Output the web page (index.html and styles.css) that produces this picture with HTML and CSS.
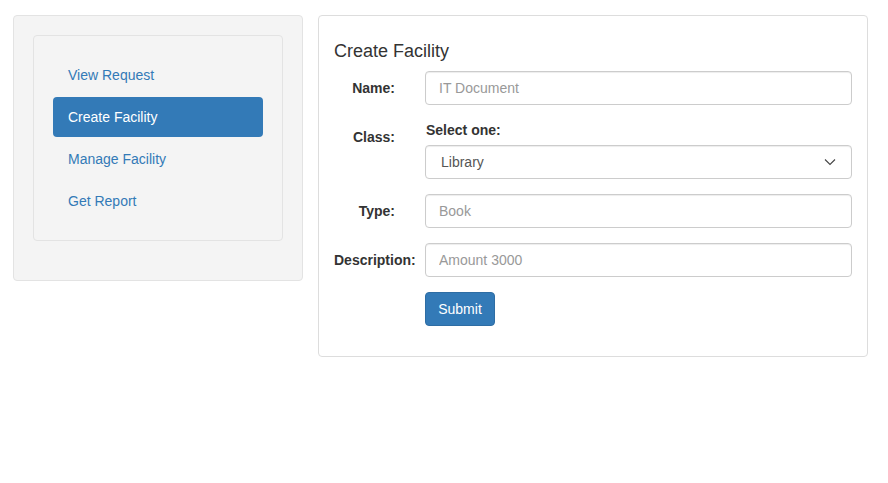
FILE: index.html
```html
<!DOCTYPE html>
<html>
<head>
<meta charset="utf-8">
<link rel="stylesheet" href="styles.css">
</head>
<body>
<div class="layout">
  <aside class="well outer">
    <div class="well inner">
      <ul class="pills">
        <li><a href="#">View Request</a></li>
        <li class="active"><a href="#">Create Facility</a></li>
        <li><a href="#">Manage Facility</a></li>
        <li><a href="#">Get Report</a></li>
      </ul>
    </div>
  </aside>
  <main class="panel">
    <div class="title">Create Facility</div>
    <form class="form">
      <div class="row">
        <label class="lbl">Name:</label>
        <div class="field"><input class="control" type="text" placeholder="IT Document"></div>
      </div>
      <div class="row">
        <label class="lbl">Class:</label>
        <div class="field">
          <div class="sublbl">Select one:</div>
          <div class="select-wrap">
            <select class="control select"><option>Library</option></select>
            <svg class="chev" width="12" height="8" viewBox="0 0 12 8"><path d="M1 1.5 L6 6.5 L11 1.5" fill="none" stroke="#444" stroke-width="1.1"/></svg>
          </div>
        </div>
      </div>
      <div class="row">
        <label class="lbl">Type:</label>
        <div class="field"><input class="control" type="text" placeholder="Book"></div>
      </div>
      <div class="row">
        <label class="lbl">Description:</label>
        <div class="field"><input class="control" type="text" placeholder="Amount 3000"></div>
      </div>
      <div class="row">
        <div class="lbl"></div>
        <div class="field"><button class="btn" type="button">Submit</button></div>
      </div>
    </form>
  </main>
</div>
</body>
</html>
```
FILE: styles.css
```css
* { box-sizing: border-box; }
html, body { margin: 0; padding: 0; background: #fff; }
body {
  font-family: "Liberation Sans", Arial, sans-serif;
  font-size: 14px;
  line-height: 20px;
  color: #333;
}
.layout {
  display: flex;
  align-items: flex-start;
  gap: 15px;
  padding: 15px 0 0 13px;
}
.well {
  background: #f4f4f4;
  border: 1px solid #e3e3e3;
  border-radius: 4px;
  padding: 19px;
}
.outer { width: 290px; }
.inner { margin-bottom: 20px; }
.pills { list-style: none; margin: 0; padding: 0; display: flex; flex-direction: column; gap: 2px; }
.pills a {
  display: block;
  padding: 10px 15px;
  color: #337ab7;
  text-decoration: none;
  border-radius: 4px;
}
.pills .active a { background: #337ab7; color: #fff; }
.panel {
  width: 550px;
  border: 1px solid #ddd;
  border-radius: 4px;
  padding: 15px;
}
.title {
  margin: 10px 0 10px;
  font-size: 18px;
  font-weight: normal;
  line-height: 20px;
  color: #333;
}
.form { display: flex; flex-direction: column; gap: 15px; padding-bottom: 15px; }
.row { display: flex; }
.lbl {
  width: 91px;
  flex: none;
  padding: 7px 30px 0 0;
  text-align: right;
  font-weight: bold;
  white-space: nowrap;
}
.row:nth-child(4) .lbl { text-align: left; }
.field { flex: 1; }
.sublbl { font-weight: bold; margin-bottom: 5px; padding-left: 1px; }
.control {
  display: block;
  width: 100%;
  height: 34px;
  padding: 6px 13px;
  font: inherit;
  color: #555;
  background: #fff;
  border: 1px solid #ccc;
  border-radius: 4px;
  box-shadow: inset 0 1px 1px rgba(0,0,0,.075);
  outline: none;
}
.control::placeholder { color: #999; }
.select-wrap { position: relative; }
.select { appearance: none; -webkit-appearance: none; padding-left: 15px; }
.chev { position: absolute; right: 16px; top: 13px; pointer-events: none; }
.btn {
  height: 34px;
  padding: 6px 12px;
  width: 70px;
  font: inherit;
  color: #fff;
  background: #337ab7;
  border: 1px solid #2e6da4;
  border-radius: 4px;
}
```
